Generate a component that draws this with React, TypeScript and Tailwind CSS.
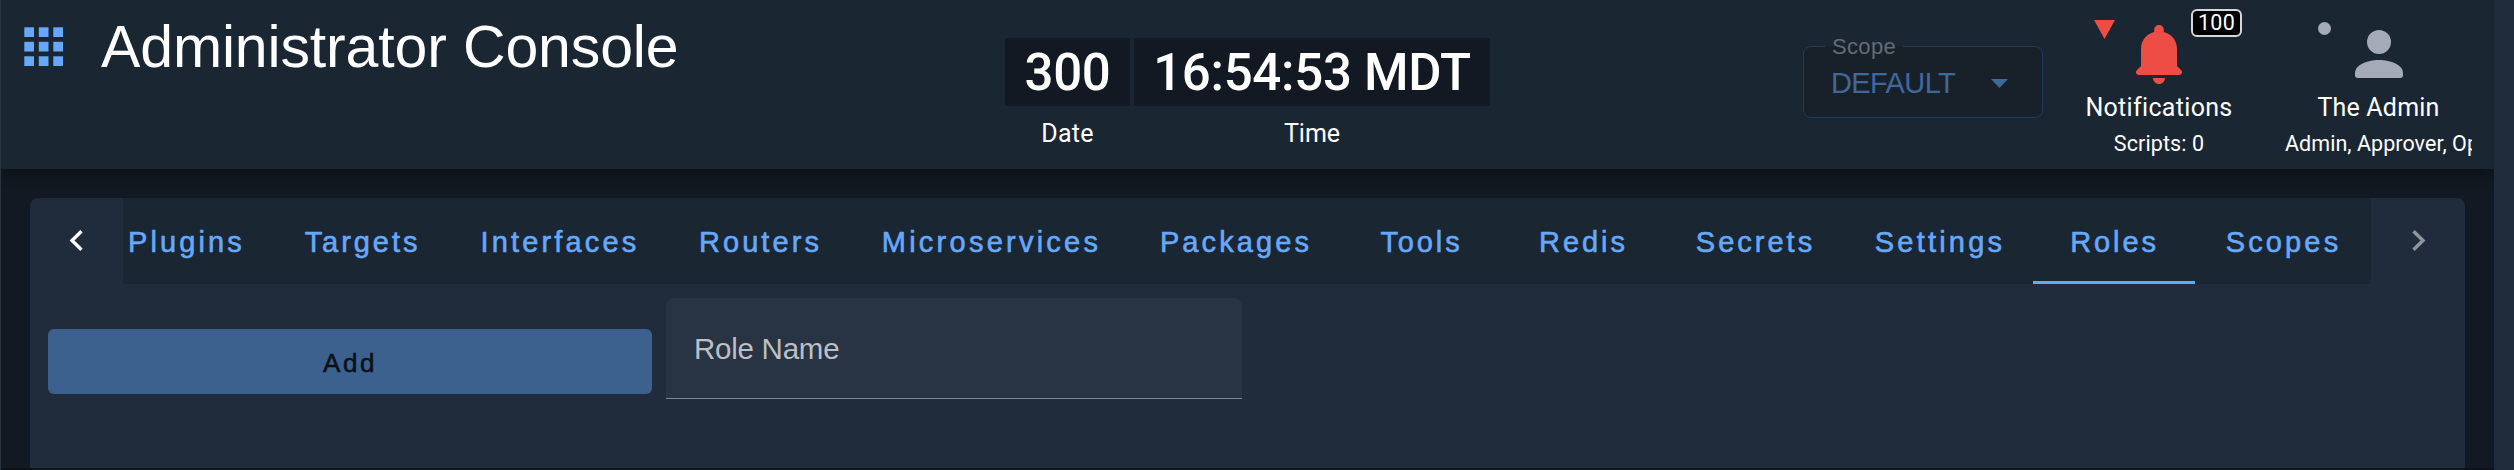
import React from "react";

const tabs = [
  { label: "Plugins", cls: "w-[176px] tracking-[3.1px]" },
  { label: "Targets", cls: "w-[176px] tracking-[2.95px]" },
  { label: "Interfaces", cls: "w-[219px] tracking-[3.15px]" },
  { label: "Routers", cls: "w-[182px] tracking-[3.1px]" },
  { label: "Microservices", cls: "w-[280px] tracking-[3.25px]" },
  { label: "Packages", cls: "w-[209px] tracking-[3.1px]" },
  { label: "Tools", cls: "w-[162px] tracking-[2.9px]" },
  { label: "Redis", cls: "w-[162px] tracking-[2.95px]" },
  { label: "Secrets", cls: "w-[182px] tracking-[3px]" },
  { label: "Settings", cls: "w-[187px] tracking-[3.2px]" },
  { label: "Roles", cls: "w-[162px] tracking-[2.9px]", active: true },
  { label: "Scopes", cls: "w-[176px] tracking-[3.15px]" },
];

function AppsIcon() {
  return (
    <svg width="39" height="39" viewBox="0 0 39 39" fill="#66a9fb">
      {[0, 14.5, 29].map((y) =>
        [0, 14.5, 29].map((x) => <rect key={`${x}-${y}`} x={x + 0.3} y={y + 0.3} width="9.700" height="9.700" />)
      )}
    </svg>
  );
}

function Clock() {
  return (
    <div className="flex gap-[4px] pt-[38px] font-['Roboto',sans-serif] text-white">
      <div className="flex w-[125px] flex-col items-center">
        <div className="flex h-[68px] w-full items-center justify-center bg-[#121922] text-[51px] leading-none font-medium tracking-[-0.4px]">300</div>
        <div className="mt-[14px] text-[25px] leading-[28px] tracking-[0.3px]">Date</div>
      </div>
      <div className="flex w-[356px] flex-col items-center">
        <div className="flex h-[68px] w-full items-center justify-center bg-[#121922] text-[51px] leading-none font-medium tracking-[-0.3px] whitespace-nowrap">16:54:53 MDT</div>
        <div className="mt-[14px] text-[25px] leading-[28px]">Time</div>
      </div>
    </div>
  );
}

function ScopeSelect() {
  return (
    <div className="relative mt-[46px] flex h-[72px] w-[240px] items-center justify-between rounded-lg border border-[#243a56] bg-[#18212a] pr-[34px] pl-[27px]">
      <span className="absolute -top-px left-[21px] h-px w-[78px] bg-[#19222c]" />
      <span className="absolute -top-[10px] left-[28px] text-[22px] leading-[20px] tracking-[0.35px] text-[#646b73]">Scope</span>
      <span className="pt-[2px] text-[29px] leading-none tracking-[-0.6px] text-[#41689b]">DEFAULT</span>
      <svg className="mt-[2px]" width="17" height="9" viewBox="0 0 17 9" fill="#41689b"><path d="M0 0h17L8.500 9z" /></svg>
    </div>
  );
}

function Notifications() {
  return (
    <div className="relative flex w-[160px] flex-col items-center pt-[25px] font-['Roboto',sans-serif] text-white">
      <svg className="absolute top-[20px] left-[15px]" width="21" height="19" viewBox="0 0 21 19" fill="#ed4d45"><path d="M0 0h21L10.500 19z" /></svg>
      <svg width="46" height="59" viewBox="0 0 46 59" fill="#ed4d45">
        <path d="M23 0c-2.700 0-4.800 2.100-4.800 4.800V7C10.300 9 5 15.500 5 24v17l-4 4c-2.200 2.200-.6 5 1.700 5h40.600c2.300 0 3.900-2.800 1.700-5l-4-4V24c0-8.500-5.300-15-13.200-17V4.800C27.800 2.100 25.700 0 23 0z" />
        <path d="M17 53h12c0 3.300-2.700 6-6 6s-6-2.700-6-6z" />
      </svg>
      <span className="absolute top-[9px] left-[112px] flex h-[28px] w-[51px] items-center justify-center rounded-md border-2 border-[#d5d7d9] bg-black text-[21.500px] leading-none tracking-[0.2px]">100</span>
      <div className="mt-[9px] text-[25px] leading-[30px] tracking-[0.32px]">Notifications</div>
      <div className="mt-[9px] text-[21.500px] leading-[24px] tracking-[0.1px]">Scripts: 0</div>
    </div>
  );
}

function User() {
  return (
    <div className="relative flex w-[187px] flex-col items-center pt-[30px] font-['Roboto',sans-serif] text-white">
      <span className="absolute top-[22px] left-[33px] size-[13px] rounded-full bg-[#a4abb6]" />
      <svg width="48" height="48" viewBox="0 0 48 48" fill="#a4abb6">
        <circle cx="24" cy="12" r="12" />
        <path d="M0 43c0-8 12-13 24-13s24 5 24 13v2.500c0 1.700-1.300 2.500-3 2.500H3c-1.700 0-3-.8-3-2.500z" />
      </svg>
      <div className="mt-[15px] text-[25px] leading-[30px] tracking-[0.2px]">The Admin</div>
      <div className="mt-[9px] w-full overflow-hidden text-[21.500px] leading-[24px] tracking-[0.05px] whitespace-nowrap">Admin, Approver, Operator</div>
    </div>
  );
}

export default function App() {
  return (
    <div className="flex h-[470px] w-[2514px] overflow-hidden border-l border-[#2a3440] bg-[#202c3b] font-['Liberation_Sans',Arial,sans-serif]">
      <div className="flex w-[2493px] flex-col overflow-hidden bg-[#121922]">
        <header className="z-10 flex h-[169px] shrink-0 bg-[#1b2633] shadow-[0_4px_14px_rgba(0,0,0,0.45)]">
          <div className="flex w-[1004px] items-start pl-[23px]">
            <div className="pt-[27px]"><AppsIcon /></div>
            <h1 className="ml-[38px] pt-[14px] text-[59px] leading-[66px] tracking-[-0.14px] whitespace-nowrap text-white">Administrator Console</h1>
          </div>
          <Clock />
          <div className="ml-auto flex items-start pr-[22px]">
            <ScopeSelect />
            <div className="ml-[36px]"><Notifications /></div>
            <div className="ml-[46px]"><User /></div>
          </div>
        </header>
        <main className="mt-[29px] ml-[29px] h-[270px] w-[2435px] shrink-0 overflow-hidden rounded-t-lg bg-[#202c3b]">
          <nav className="flex h-[86px]">
            <button className="flex w-[93px] shrink-0 justify-center pt-[32px] pr-[2px]">
              <svg width="14" height="21" viewBox="0 0 14 21" fill="none" stroke="#fff" strokeWidth="3.400"><path d="M12.500 1.200 3 10.500l9.500 9.300" /></svg>
            </button>
            <div className="flex w-[2248px] justify-end overflow-hidden bg-[#1b2633]">
              {tabs.map((t) => (
                <div key={t.label} className={`flex shrink-0 flex-col text-center ${t.cls}`}>
                  <span className="pt-[26px] pl-px text-[29px] leading-[36px] text-[#66a9fb] [-webkit-text-stroke:0.6px_#66a9fb]">{t.label}</span>
                  {t.active && <span className="mt-auto h-[3px] bg-[#66a9fb]" />}
                </div>
              ))}
            </div>
            <button className="flex flex-1 pt-[32px] pl-[41px]">
              <svg width="14" height="21" viewBox="0 0 14 21" fill="none" stroke="#909599" strokeWidth="3.400"><path d="M1.500 1.200 11 10.500l-9.500 9.300" /></svg>
            </button>
          </nav>
          <div className="flex items-start pt-[14px] pl-[18px]">
            <button className="mt-[31px] h-[65px] w-[604px] rounded-md bg-[#3c618e] pt-[2px] text-[26px] leading-none tracking-[2.500px] text-[#0b1016] [-webkit-text-stroke:0.5px_#0b1016]">Add</button>
            <div className="ml-[14px] flex h-[101px] w-[576px] items-center rounded-t-lg border-b border-[#7f868c] bg-[#283444] pt-[2px] pl-[28px] text-[29.500px] leading-none tracking-[-0.25px] text-[#bcbfc3]">Role Name</div>
          </div>
        </main>
        <div className="h-[2px] shrink-0 bg-[#0e1319]" />
      </div>
    </div>
  );
}
